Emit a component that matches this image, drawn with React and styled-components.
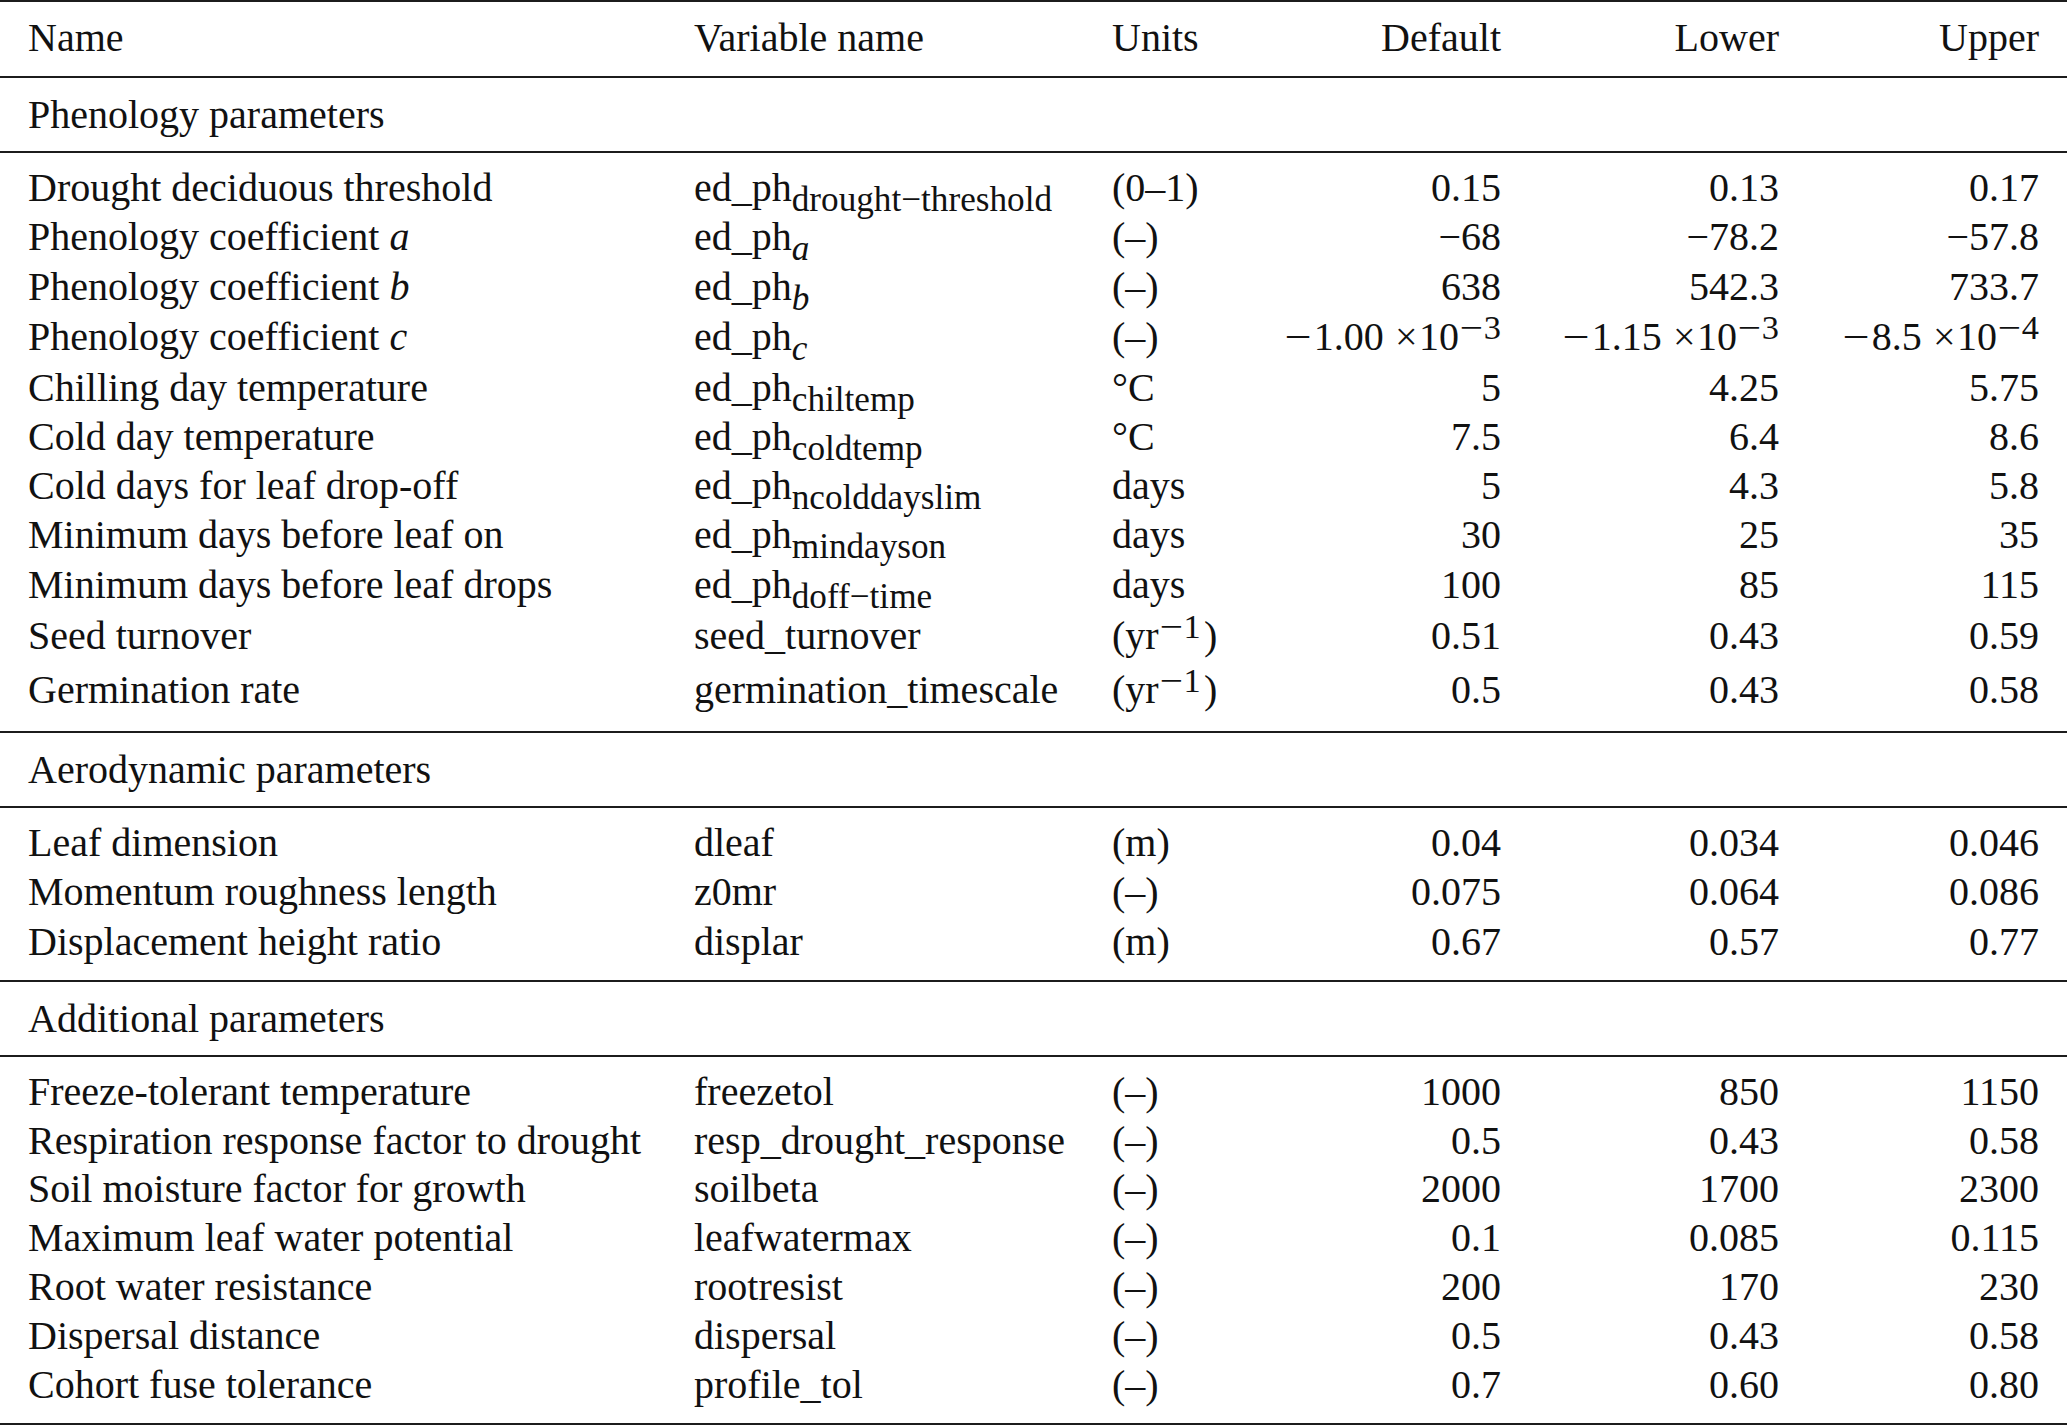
import React from 'react';
import styled, { createGlobalStyle } from 'styled-components';

const GlobalStyle = createGlobalStyle`
  html, body {
    margin: 0;
    padding: 0;
    background: #fff;
    overflow: hidden;
  }
  body {
    font-family: "Liberation Serif", "Times New Roman", serif;
    color: #111;
  }
`;

const Table = styled.div`
  width: 2067px;
  border-top: 2px solid #1c1c1c;
  font-size: 40px;
`;

const rowHeights = { base: 49.3, tight: 48.9, sci: 51.5, seed: 53, germ: 55 };

const Row = styled.div`
  display: grid;
  grid-template-columns: 666px 418px 138px 251px 278px 260px;
  padding: 0 28px;
  align-items: center;
  height: ${p => rowHeights[p.$size || 'base']}px;
  white-space: nowrap;
`;

const HeadRow = styled(Row)`
  height: 76px;
  padding-bottom: 4px;
  box-sizing: border-box;
  border-bottom: 2px solid #1c1c1c;
`;

const SectionTitle = styled.div`
  height: 73px;
  display: flex;
  align-items: center;
  padding: 0 28px;
  border-bottom: 2px solid #1c1c1c;
`;

const Body = styled.div`
  padding: 10px 0 14px;
  border-bottom: 2px solid #1c1c1c;
`;

const Cell = styled.div`
  text-align: ${p => (p.$right ? 'right' : 'left')};
`;

const Sub = styled.sub`
  font-size: 0.88em;
  line-height: 0;
  vertical-align: -0.28em;
  font-style: ${p => (p.$italic ? 'italic' : 'normal')};
`;

const Sup = styled.sup`
  font-size: 0.86em;
  line-height: 0;
  vertical-align: 0.31em;
  margin-right: ${p => (p.$gap ? '0.1em' : '0')};
`;

const WideMinus = styled.span`
  display: inline-block;
  width: 0.7em;
  text-align: center;
  transform: scaleX(1.2);
  margin-right: ${p => p.$after || '0.04em'};
`;

const Times = styled.span`
  margin: 0 0.04em 0 0.28em;
`;

const Em = styled.i`
  font-style: italic;
`;

const Sci = ({ m, e }) => (
  <>
    <WideMinus>−</WideMinus>{m}<Times>×</Times>10<Sup><WideMinus $after="0.02em">−</WideMinus>{e}</Sup>
  </>
);

const perYear = <>(yr<Sup $gap><WideMinus $after="0.02em">−</WideMinus>1</Sup>)</>;

const sections = [
  {
    title: 'Phenology parameters',
    size: 'base',
    rows: [
      ['Drought deciduous threshold', <>ed_ph<Sub>drought−threshold</Sub></>, '(0–1)', '0.15', '0.13', '0.17'],
      [<>Phenology coefficient <Em>a</Em></>, <>ed_ph<Sub $italic>a</Sub></>, '(–)', '−68', '−78.2', '−57.8'],
      [<>Phenology coefficient <Em>b</Em></>, <>ed_ph<Sub $italic>b</Sub></>, '(–)', '638', '542.3', '733.7'],
      [<>Phenology coefficient <Em>c</Em></>, <>ed_ph<Sub $italic>c</Sub></>, '(–)', <Sci m="1.00" e="3" />, <Sci m="1.15" e="3" />, <Sci m="8.5" e="4" />, 'sci'],
      ['Chilling day temperature', <>ed_ph<Sub>chiltemp</Sub></>, '°C', '5', '4.25', '5.75'],
      ['Cold day temperature', <>ed_ph<Sub>coldtemp</Sub></>, '°C', '7.5', '6.4', '8.6'],
      ['Cold days for leaf drop-off', <>ed_ph<Sub>ncolddayslim</Sub></>, 'days', '5', '4.3', '5.8'],
      ['Minimum days before leaf on', <>ed_ph<Sub>mindayson</Sub></>, 'days', '30', '25', '35'],
      ['Minimum days before leaf drops', <>ed_ph<Sub>doff−time</Sub></>, 'days', '100', '85', '115'],
      ['Seed turnover', 'seed_turnover', perYear, '0.51', '0.43', '0.59', 'seed'],
      ['Germination rate', 'germination_timescale', perYear, '0.5', '0.43', '0.58', 'germ'],
    ],
  },
  {
    title: 'Aerodynamic parameters',
    size: 'base',
    rows: [
      ['Leaf dimension', 'dleaf', '(m)', '0.04', '0.034', '0.046'],
      ['Momentum roughness length', 'z0mr', '(–)', '0.075', '0.064', '0.086'],
      ['Displacement height ratio', 'displar', '(m)', '0.67', '0.57', '0.77'],
    ],
  },
  {
    title: 'Additional parameters',
    size: 'tight',
    rows: [
      ['Freeze-tolerant temperature', 'freezetol', '(–)', '1000', '850', '1150'],
      ['Respiration response factor to drought', 'resp_drought_response', '(–)', '0.5', '0.43', '0.58'],
      ['Soil moisture factor for growth', 'soilbeta', '(–)', '2000', '1700', '2300'],
      ['Maximum leaf water potential', 'leafwatermax', '(–)', '0.1', '0.085', '0.115'],
      ['Root water resistance', 'rootresist', '(–)', '200', '170', '230'],
      ['Dispersal distance', 'dispersal', '(–)', '0.5', '0.43', '0.58'],
      ['Cohort fuse tolerance', 'profile_tol', '(–)', '0.7', '0.60', '0.80'],
    ],
  },
];

const headers = ['Name', 'Variable name', 'Units', 'Default', 'Lower', 'Upper'];

export default function App() {
  return (
    <>
      <GlobalStyle />
      <Table>
        <HeadRow>
          {headers.map((h, i) => (
            <Cell key={h} $right={i > 2}>{h}</Cell>
          ))}
        </HeadRow>
        {sections.map(sec => (
          <React.Fragment key={sec.title}>
            <SectionTitle>{sec.title}</SectionTitle>
            <Body>
              {sec.rows.map((r, idx) => (
                <Row key={idx} $size={r[6] || sec.size}>
                  {r.slice(0, 6).map((c, i) => (
                    <Cell key={i} $right={i > 2}>{c}</Cell>
                  ))}
                </Row>
              ))}
            </Body>
          </React.Fragment>
        ))}
      </Table>
    </>
  );
}
